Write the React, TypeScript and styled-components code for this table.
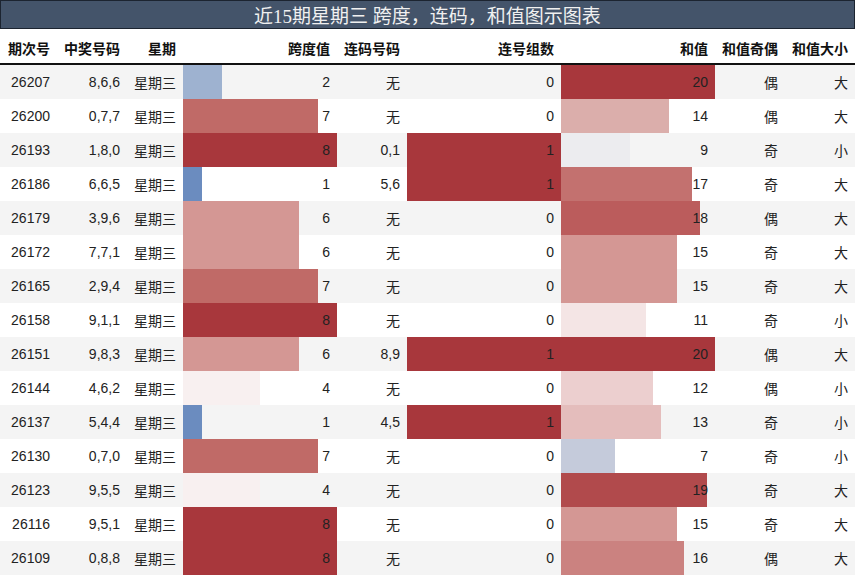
import React from "react";
import styled, { createGlobalStyle } from "styled-components";

const GlobalStyle = createGlobalStyle`
  html, body { margin: 0; padding: 0; background: #ffffff; }
  body { font-family: "Liberation Sans", "Noto Sans CJK SC", sans-serif; color: #222; }
`;

const COLS = "57px 70px 56px 154px 70px 154px 154px 70px 70px";
const BAR_W = 154;

type RowData = {
  issue: string;
  nums: string;
  weekday: string;
  span: number;
  consec: string;
  groups: number;
  sum: number;
  parity: string;
  size: string;
};

const raw: [string, string, number, string, number, number, string, string][] = [
  ["26207", "8,6,6", 2, "无", 0, 20, "偶", "大"],
  ["26200", "0,7,7", 7, "无", 0, 14, "偶", "大"],
  ["26193", "1,8,0", 8, "0,1", 1, 9, "奇", "小"],
  ["26186", "6,6,5", 1, "5,6", 1, 17, "奇", "大"],
  ["26179", "3,9,6", 6, "无", 0, 18, "偶", "大"],
  ["26172", "7,7,1", 6, "无", 0, 15, "奇", "大"],
  ["26165", "2,9,4", 7, "无", 0, 15, "奇", "大"],
  ["26158", "9,1,1", 8, "无", 0, 11, "奇", "小"],
  ["26151", "9,8,3", 6, "8,9", 1, 20, "偶", "大"],
  ["26144", "4,6,2", 4, "无", 0, 12, "偶", "小"],
  ["26137", "5,4,4", 1, "4,5", 1, 13, "奇", "小"],
  ["26130", "0,7,0", 7, "无", 0, 7, "奇", "小"],
  ["26123", "9,5,5", 4, "无", 0, 19, "奇", "大"],
  ["26116", "9,5,1", 8, "无", 0, 15, "奇", "大"],
  ["26109", "0,8,8", 8, "无", 0, 16, "偶", "大"],
];

const rows: RowData[] = raw.map(([issue, nums, span, consec, groups, sum, parity, size]) => ({
  issue,
  nums,
  weekday: "星期三",
  span,
  consec,
  groups,
  sum,
  parity,
  size,
}));

const STOPS: [number, [number, number, number]][] = [
  [0, [35, 105, 189]],
  [0.125, [107, 140, 191]],
  [0.25, [158, 178, 208]],
  [0.35, [197, 203, 219]],
  [0.45, [236, 236, 239]],
  [0.5, [248, 240, 240]],
  [0.55, [244, 229, 229]],
  [0.6, [236, 207, 207]],
  [0.65, [228, 189, 188]],
  [0.7, [219, 174, 171]],
  [0.75, [212, 151, 148]],
  [0.8, [203, 130, 128]],
  [0.85, [195, 113, 111]],
  [0.875, [192, 106, 103]],
  [0.9, [187, 92, 92]],
  [0.95, [177, 74, 76]],
  [1, [168, 55, 60]],
];

function scaleColor(t: number): string {
  const v = Math.max(0, Math.min(1, t));
  for (let i = 0; i < STOPS.length - 1; i++) {
    const [a, ca] = STOPS[i];
    const [b, cb] = STOPS[i + 1];
    if (v >= a && v <= b) {
      const k = b === a ? 0 : (v - a) / (b - a);
      const c = ca.map((x, j) => Math.round(x + (cb[j] - x) * k));
      return `rgb(${c[0]}, ${c[1]}, ${c[2]})`;
    }
  }
  const c = STOPS[STOPS.length - 1][1];
  return `rgb(${c[0]}, ${c[1]}, ${c[2]})`;
}

function barBg(value: number, max: number): string {
  const t = value / max;
  const w = Math.round(t * BAR_W);
  if (w <= 0) return "transparent";
  const c = scaleColor(t);
  return `linear-gradient(to right, ${c} 0px, ${c} ${w}px, transparent ${w}px)`;
}

const Page = styled.div`
  width: 855px;
  display: flex;
  flex-direction: column;
`;

const TitleBar = styled.div`
  height: 27px;
  background: #44546a;
  border: 1px solid #1c2430;
  display: flex;
  align-items: center;
  justify-content: center;
  color: #f0f0f0;
  font-family: "Liberation Serif", "Noto Sans CJK SC", serif;
  font-size: 19px;
  white-space: nowrap;
`;

const HeaderRow = styled.div`
  display: grid;
  grid-template-columns: ${COLS};
  height: 34px;
  border-bottom: 2px solid #111;
  background: #ffffff;
`;

const HeadCell = styled.div`
  display: flex;
  align-items: center;
  justify-content: flex-end;
  padding: 3px 7px 0 0;
  font-size: 14px;
  font-weight: bold;
  color: #111;
  white-space: nowrap;
`;

const Row = styled.div<{ $alt: boolean }>`
  display: grid;
  grid-template-columns: ${COLS};
  height: 34px;
  background: ${(p) => (p.$alt ? "#f4f4f4" : "#ffffff")};
`;

const Cell = styled.div`
  display: flex;
  align-items: center;
  justify-content: flex-end;
  padding-right: 7px;
  font-size: 14px;
  color: #222;
  white-space: nowrap;
`;

const BarCell = styled(Cell)`
  background-repeat: no-repeat;
`;

const headers = ["期次号", "中奖号码", "星期", "跨度值", "连码号码", "连号组数", "和值", "和值奇偶", "和值大小"];

export default function App() {
  return (
    <Page>
      <GlobalStyle />
      <TitleBar>近15期星期三 跨度，连码，和值图示图表</TitleBar>
      <HeaderRow>
        {headers.map((h) => (
          <HeadCell key={h}>{h}</HeadCell>
        ))}
      </HeaderRow>
      {rows.map((r, i) => (
        <Row key={r.issue} $alt={i % 2 === 0}>
          <Cell>{r.issue}</Cell>
          <Cell>{r.nums}</Cell>
          <Cell>{r.weekday}</Cell>
          <BarCell style={{ background: barBg(r.span, 8) }}>{r.span}</BarCell>
          <Cell>{r.consec}</Cell>
          <BarCell style={{ background: barBg(r.groups, 1) }}>{r.groups}</BarCell>
          <BarCell style={{ background: barBg(r.sum, 20) }}>{r.sum}</BarCell>
          <Cell>{r.parity}</Cell>
          <Cell>{r.size}</Cell>
        </Row>
      ))}
    </Page>
  );
}
